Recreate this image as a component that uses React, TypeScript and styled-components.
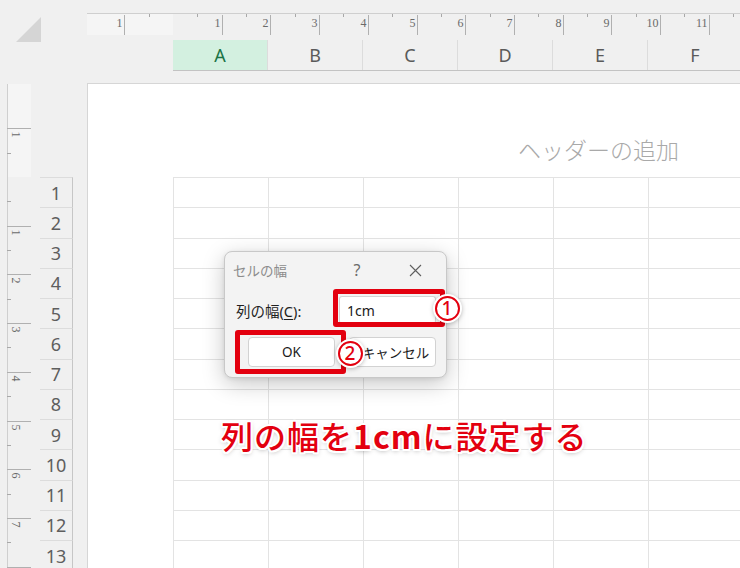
import React from 'react'
import styled, { createGlobalStyle } from 'styled-components'

const RED = '#e3000f'
const CM = 48.7

const GlobalStyle = createGlobalStyle`
  html, body {
    margin: 0;
    padding: 0;
  }
  body {
    width: 740px;
    height: 568px;
    overflow: hidden;
    background: #f0f0f0;
    font-family: 'Noto Sans', 'Noto Sans CJK JP', sans-serif;
  }
`

// window frame: corner / top bar / side bar / page
const Screen = styled.div`
  position: relative;
  width: 740px;
  height: 568px;
  overflow: hidden;
  display: grid;
  grid-template-columns: 87px 1fr;
  grid-template-rows: 83px 1fr;
  background: #f0f0f0;
`

const Corner = styled.div`
  padding: 17px 0 0 16px;
`

const SelectAll = styled.div`
  width: 25px;
  height: 25px;
  background: #d5d5d5;
  clip-path: polygon(100% 0, 100% 100%, 0 100%);
`

const TopBar = styled.div`
  display: flex;
  flex-direction: column;
  padding-top: 13px;
  min-width: 0;
  overflow: hidden;
`

const Ruler = styled.svg`
  display: block;
  flex: none;
`

const ColumnHeaders = styled.div`
  display: flex;
  margin-top: 5px;
  margin-left: 86px;
  height: 30px;
  border-bottom: 1px solid #c3c3c3;
`

type SelectProps = { $selected?: boolean }
const ColHeader = styled.div<SelectProps>`
  flex: none;
  width: 95px;
  box-sizing: border-box;
  border-right: 1px solid #dcdcdc;
  display: flex;
  align-items: center;
  justify-content: center;
  font-size: 18px;
  color: ${(p) => (p.$selected ? '#1b7446' : '#5a5a5a')};
  background: ${(p) => (p.$selected ? '#d3f0e0' : 'transparent')};
`

const SideBar = styled.div`
  display: flex;
  padding-left: 7px;
  min-height: 0;
  overflow: hidden;
`

const RowHeaders = styled.div`
  display: flex;
  flex-direction: column;
  margin-left: 9px;
  width: 33px;
  padding-top: 94px;
`

const RowHeader = styled.div`
  flex: none;
  height: 30.25px;
  box-sizing: border-box;
  border-top: 1px solid #dcdcdc;
  border-right: 1px solid #c6c6c6;
  display: flex;
  align-items: center;
  justify-content: center;
  font-size: 18px;
  color: #5e5e5e;
`

const Page = styled.div`
  background: #fff;
  border-top: 1px solid #d6d6d6;
  border-left: 1px solid #d6d6d6;
  padding-left: 85px;
  display: flex;
  flex-direction: column;
  overflow: hidden;
  min-width: 0;
`

const HeaderZone = styled.div`
  flex: none;
  height: 93px;
  box-sizing: border-box;
  padding: 54px 61px 0 0;
  display: flex;
  justify-content: flex-end;
  align-items: flex-start;
  font-family: 'Noto Sans CJK JP', sans-serif;
  font-weight: 300;
  font-size: 23px;
  line-height: 23px;
  color: #a9a9a9;
`

const Sheet = styled.div`
  display: grid;
  grid-template-columns: repeat(6, 95px);
  grid-auto-rows: 30.25px;
  border-top: 1px solid #e3e3e3;
  border-left: 1px solid #e3e3e3;
  width: max-content;
`

const Cell = styled.div`
  box-sizing: border-box;
  border-right: 1px solid #e3e3e3;
  border-bottom: 1px solid #e3e3e3;
`

// dialog
const Dialog = styled.div`
  position: absolute;
  left: 224px;
  top: 251px;
  width: 223px;
  height: 127px;
  box-sizing: border-box;
  background: #f3f3f3;
  border: 1px solid #c8c8c8;
  border-radius: 8px;
  box-shadow: 0 6px 22px rgba(0, 0, 0, 0.22), 0 1px 4px rgba(0, 0, 0, 0.08);
  display: flex;
  flex-direction: column;
`

const TitleBar = styled.div`
  display: flex;
  align-items: center;
  height: 36px;
  padding: 0 2px 0 8px;
`

const Title = styled.div`
  flex: 1;
  font-size: 13.5px;
  color: #8c8c8c;
`

const TitleButton = styled.div`
  width: 58px;
  display: flex;
  justify-content: center;
  align-items: center;
  font-size: 16px;
  color: #6a6a6a;
`

const FieldRow = styled.div`
  display: flex;
  align-items: center;
  height: 28px;
  margin-top: 8px;
  padding-left: 11px;
`

const Label = styled.div`
  width: 103px;
  font-size: 14.5px;
  color: #1f1f1f;
  u {
    text-decoration-thickness: 1px;
    text-underline-offset: 2px;
  }
`

const TextBox = styled.div`
  width: 97px;
  height: 28px;
  box-sizing: border-box;
  background: #fff;
  border: 1px solid #d4d4d4;
  border-bottom-color: #8a8a8a;
  border-radius: 3px;
  padding-left: 7px;
  display: flex;
  align-items: center;
  font-size: 14px;
  color: #1a1a1a;
`

const ButtonRow = styled.div`
  display: flex;
  gap: 14px;
  margin-top: 13px;
  padding-left: 23px;
`

type ButtonProps = { $shift?: number }
const Button = styled.div<ButtonProps>`
  width: 87px;
  height: 30px;
  box-sizing: border-box;
  background: #fff;
  border: 1px solid #d2d2d2;
  border-radius: 4px;
  padding-left: ${(p) => p.$shift ?? 0}px;
  display: flex;
  align-items: center;
  justify-content: center;
  font-size: 13.5px;
  color: #1a1a1a;
`

// annotations over the screenshot
type BoxProps = { $x: number; $y: number; $w: number; $h: number }
const Frame = styled.div<BoxProps>`
  position: absolute;
  left: ${(p) => p.$x}px;
  top: ${(p) => p.$y}px;
  width: ${(p) => p.$w}px;
  height: ${(p) => p.$h}px;
  box-sizing: border-box;
  border: 5px solid ${RED};
  border-radius: 3px;
`

type PinProps = { $x: number; $y: number }
const Badge = styled.div<PinProps>`
  position: absolute;
  left: ${(p) => p.$x - 12.5}px;
  top: ${(p) => p.$y - 12.5}px;
  width: 25px;
  height: 25px;
  box-sizing: border-box;
  border: 2px solid ${RED};
  border-radius: 50%;
  background: #fff;
  box-shadow: 0 0 0 2px #fff, 0 1px 4px 2px rgba(0, 0, 0, 0.25);
  display: flex;
  align-items: center;
  justify-content: center;
  font-size: 19px;
  font-weight: 500;
  line-height: 1;
  color: ${RED};
`

const Callout = styled.div`
  position: absolute;
  left: 221px;
  top: 419px;
  white-space: nowrap;
  font-family: 'Noto Sans CJK JP', sans-serif;
  font-size: 32px;
  font-weight: 500;
  letter-spacing: 1px;
  line-height: 1;
  color: ${RED};
  text-shadow: 2px 0 #fff, -2px 0 #fff, 0 2px #fff, 0 -2px #fff,
    1.5px 1.5px #fff, -1.5px 1.5px #fff, 1.5px -1.5px #fff,
    -1.5px -1.5px #fff, 0 2px 5px rgba(0, 0, 0, 0.35);
  b {
    font-weight: 700;
  }
`

const columns = ['A', 'B', 'C', 'D', 'E', 'F']
const rows = Array.from({ length: 13 }, (_, i) => i + 1)

const TopRuler: React.FC = () => {
  const w = 653
  const zero = 86
  const marks = Array.from({ length: 13 }, (_, i) => i - 1)
  return (
    <Ruler width={w} height={22}>
      <rect x={0} y={1} width={zero} height={21} fill="#f5f5f5" />
      <line x1={0} y1={0.5} x2={w} y2={0.5} stroke="#cfcfcf" />
      {marks.map((i) => {
        const x = Math.round(zero + i * CM) + 0.5
        const hx = Math.round(zero + (i + 0.5) * CM) + 0.5
        return (
          <g key={i}>
            {i !== 0 && (
              <line x1={x} y1={2} x2={x} y2={22} stroke="#b0b0b0" />
            )}
            <line x1={hx} y1={1} x2={hx} y2={4} stroke="#a8a8a8" />
            {i !== 0 && (
              <text
                x={x - 2}
                y={14}
                textAnchor="end"
                fontFamily="'Liberation Serif', serif"
                fontSize={12}
                fill="#6a6a6a"
              >
                {Math.abs(i)}
              </text>
            )}
          </g>
        )
      })}
    </Ruler>
  )
}

const LeftRuler: React.FC = () => {
  const h = 485
  const zero = 94
  const marks = Array.from({ length: 10 }, (_, i) => i - 1)
  return (
    <Ruler width={24} height={h}>
      <rect x={1} y={1} width={23} height={zero - 1} fill="#f5f5f5" />
      <line x1={0.5} y1={1} x2={0.5} y2={h} stroke="#cfcfcf" />
      {marks.map((i) => {
        const y = Math.round(zero + i * CM) + 0.5
        const hy = Math.round(zero + (i + 0.5) * CM) + 0.5
        return (
          <g key={i}>
            {i !== 0 && (
              <line x1={0} y1={y} x2={24} y2={y} stroke="#b0b0b0" />
            )}
            <line x1={0} y1={hy} x2={4} y2={hy} stroke="#a8a8a8" />
            {i !== 0 && i < 8 && (
              <text
                x={9}
                y={y + 6}
                transform={`rotate(90 9 ${y + 6})`}
                textAnchor="middle"
                dominantBaseline="central"
                fontFamily="'Liberation Serif', serif"
                fontSize={12}
                fill="#6a6a6a"
              >
                {Math.abs(i)}
              </text>
            )}
          </g>
        )
      })}
    </Ruler>
  )
}

const CloseIcon: React.FC = () => (
  <svg width={13} height={13} viewBox="0 0 13 13">
    <path d="M1 1 L12 12 M12 1 L1 12" stroke="#5f5f5f" strokeWidth={1.1} />
  </svg>
)

export default function App() {
  return (
    <>
      <GlobalStyle />
      <Screen>
        <Corner>
          <SelectAll />
        </Corner>
        <TopBar>
          <TopRuler />
          <ColumnHeaders>
            {columns.map((c, i) => (
              <ColHeader key={c} $selected={i === 0}>
                {c}
              </ColHeader>
            ))}
          </ColumnHeaders>
        </TopBar>
        <SideBar>
          <LeftRuler />
          <RowHeaders>
            {rows.map((r) => (
              <RowHeader key={r}>{r}</RowHeader>
            ))}
          </RowHeaders>
        </SideBar>
        <Page>
          <HeaderZone>ヘッダーの追加</HeaderZone>
          <Sheet>
            {rows.map((r) => columns.map((c) => <Cell key={c + r} />))}
          </Sheet>
        </Page>

        <Dialog>
          <TitleBar>
            <Title>セルの幅</Title>
            <TitleButton>?</TitleButton>
            <TitleButton>
              <CloseIcon />
            </TitleButton>
          </TitleBar>
          <FieldRow>
            <Label>
              列の幅(<u>C</u>):
            </Label>
            <TextBox>1cm</TextBox>
          </FieldRow>
          <ButtonRow>
            <Button>OK</Button>
            <Button $shift={6}>キャンセル</Button>
          </ButtonRow>
        </Dialog>

        <Frame $x={333} $y={289} $w={112} $h={38} />
        <Frame $x={235} $y={330} $w={111} $h={44} />
        <Badge $x={447} $y={308}>1</Badge>
        <Badge $x={350} $y={353}>2</Badge>

        <Callout>
          列の幅を<b>1cm</b>に設定する
        </Callout>
      </Screen>
    </>
  )
}
